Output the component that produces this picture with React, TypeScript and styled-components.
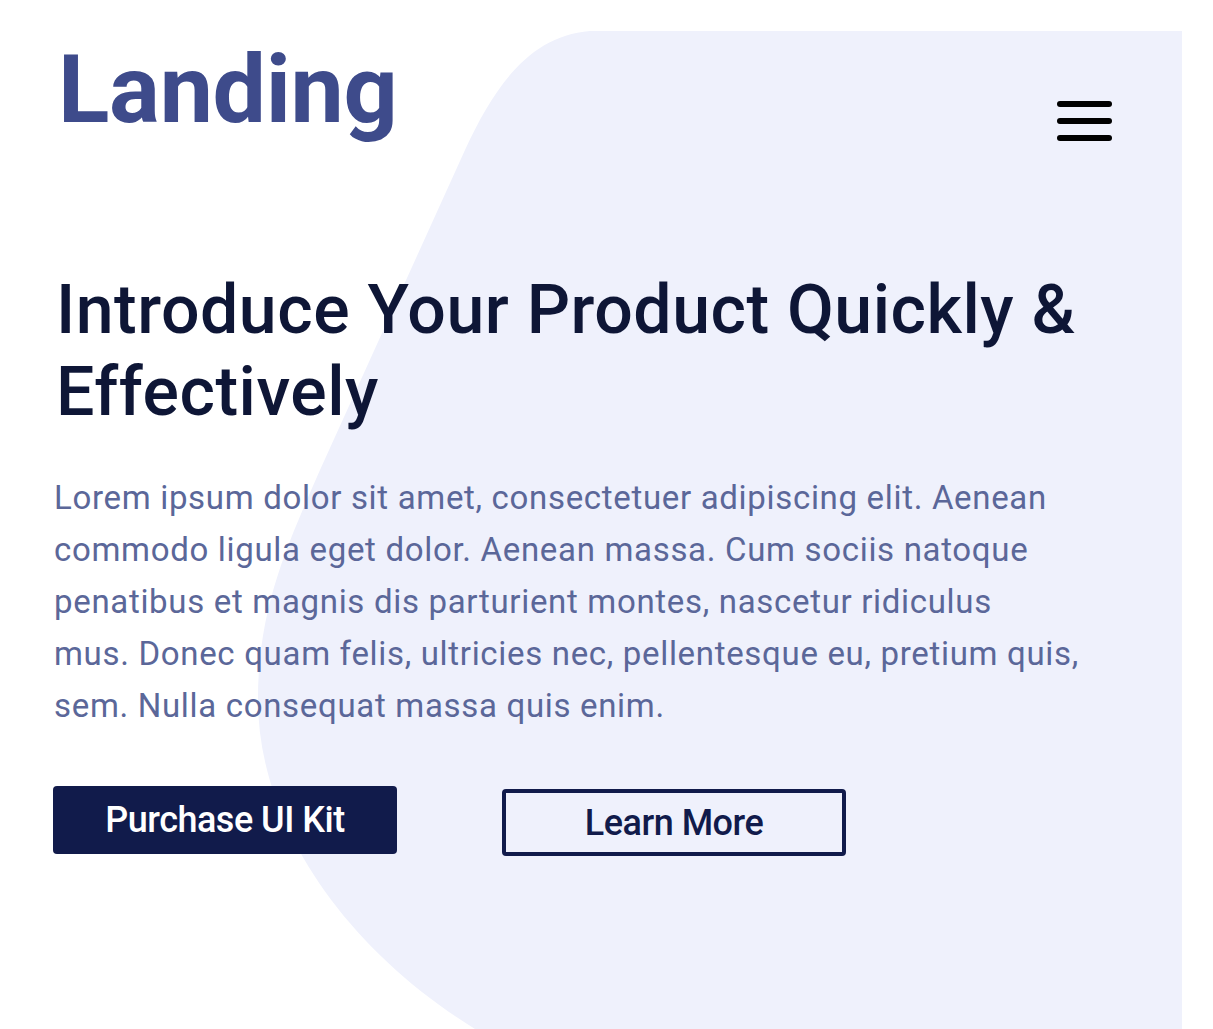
import React from "react";
import styled, { createGlobalStyle } from "styled-components";

const Global = createGlobalStyle`
  html, body { margin: 0; padding: 0; background: #ffffff; }
  body { font-family: Roboto, "Liberation Sans", sans-serif; }
  * { box-sizing: border-box; }
`;

const Page = styled.div`
  position: relative;
  width: 1213px;
  height: 1029px;
  overflow: hidden;
  background: #ffffff;
`;

const Blob = styled.svg`
  position: absolute;
  left: 0;
  top: 0;
  z-index: 0;
`;

const Content = styled.div`
  position: relative;
  z-index: 1;
  display: flex;
  flex-direction: column;
  padding: 42px 0 0 53px;
`;

const Header = styled.header`
  display: flex;
  justify-content: space-between;
  align-items: flex-start;
  padding-right: 100px;
`;

const Logo = styled.div`
  margin-left: 5px;
  font-family: Roboto, "Liberation Sans", sans-serif;
  font-weight: 700;
  font-size: 95px;
  line-height: 1;
  color: #3e4b8b;
  letter-spacing: -0.3px;
`;

const MenuButton = styled.button`
  margin-top: 59px;
  width: 58px;
  height: 40px;
  padding: 0;
  border: none;
  background: transparent;
  display: flex;
  flex-direction: column;
  justify-content: space-between;
  align-items: center;
  cursor: pointer;
`;

const MenuLine = styled.span`
  display: block;
  width: 55px;
  height: 6px;
  border-radius: 3px;
  background: #000000;
`;

const Title = styled.h1`
  margin: 128px 0 0 3px;
  font-family: Roboto, "Liberation Sans", sans-serif;
  font-weight: 500;
  font-size: 68px;
  line-height: 82px;
  letter-spacing: 0.5px;
  color: #0e1636;
  max-width: 1100px;
`;

const Lead = styled.p`
  margin: 39px 0 0 1px;
  font-family: Roboto, "Liberation Sans", sans-serif;
  font-weight: 400;
  font-size: 33px;
  line-height: 52px;
  letter-spacing: 0.68px;
  color: #5b6799;
  white-space: nowrap;
`;

const Actions = styled.div`
  display: flex;
  align-items: flex-start;
  gap: 105px;
  margin-top: 54px;
`;

const Button = styled.button<{ $variant: "solid" | "outline" }>`
  width: 344px;
  height: ${(p) => (p.$variant === "solid" ? "68px" : "67px")};
  margin-top: ${(p) => (p.$variant === "solid" ? "0" : "3px")};
  border-radius: 4px;
  font-family: Roboto, "Liberation Sans", sans-serif;
  font-weight: 500;
  font-size: 36px;
  letter-spacing: -0.5px;
  display: flex;
  align-items: center;
  justify-content: center;
  cursor: pointer;
  background: ${(p) => (p.$variant === "solid" ? "#111b4b" : "transparent")};
  color: ${(p) => (p.$variant === "solid" ? "#ffffff" : "#111b4b")};
  border: ${(p) => (p.$variant === "solid" ? "none" : "4px solid #111b4b")};
`;

export default function App() {
  return (
    <>
      <Global />
      <Page>
        <Blob width="1213" height="1029" viewBox="0 0 1213 1029" aria-hidden="true">
          <path
            d="M590 31 H1182 V1029 H475 C340 945 258 820 258 700 C258 610 285 550 320 470 L465 150 C495 85 530 36 590 31 Z"
            fill="#eff1fc"
          />
        </Blob>
        <Content>
          <Header>
            <Logo>Landing</Logo>
            <MenuButton aria-label="Menu">
              <MenuLine />
              <MenuLine />
              <MenuLine />
            </MenuButton>
          </Header>
          <Title>Introduce Your Product Quickly &amp; Effectively</Title>
          <Lead>
            Lorem ipsum dolor sit amet, consectetuer adipiscing elit. Aenean
            <br />
            commodo ligula eget dolor. Aenean massa. Cum sociis natoque
            <br />
            penatibus et magnis dis parturient montes, nascetur ridiculus
            <br />
            mus. Donec quam felis, ultricies nec, pellentesque eu, pretium quis,
            <br />
            sem. Nulla consequat massa quis enim.
          </Lead>
          <Actions>
            <Button $variant="solid">Purchase UI Kit</Button>
            <Button $variant="outline">Learn More</Button>
          </Actions>
        </Content>
      </Page>
    </>
  );
}
